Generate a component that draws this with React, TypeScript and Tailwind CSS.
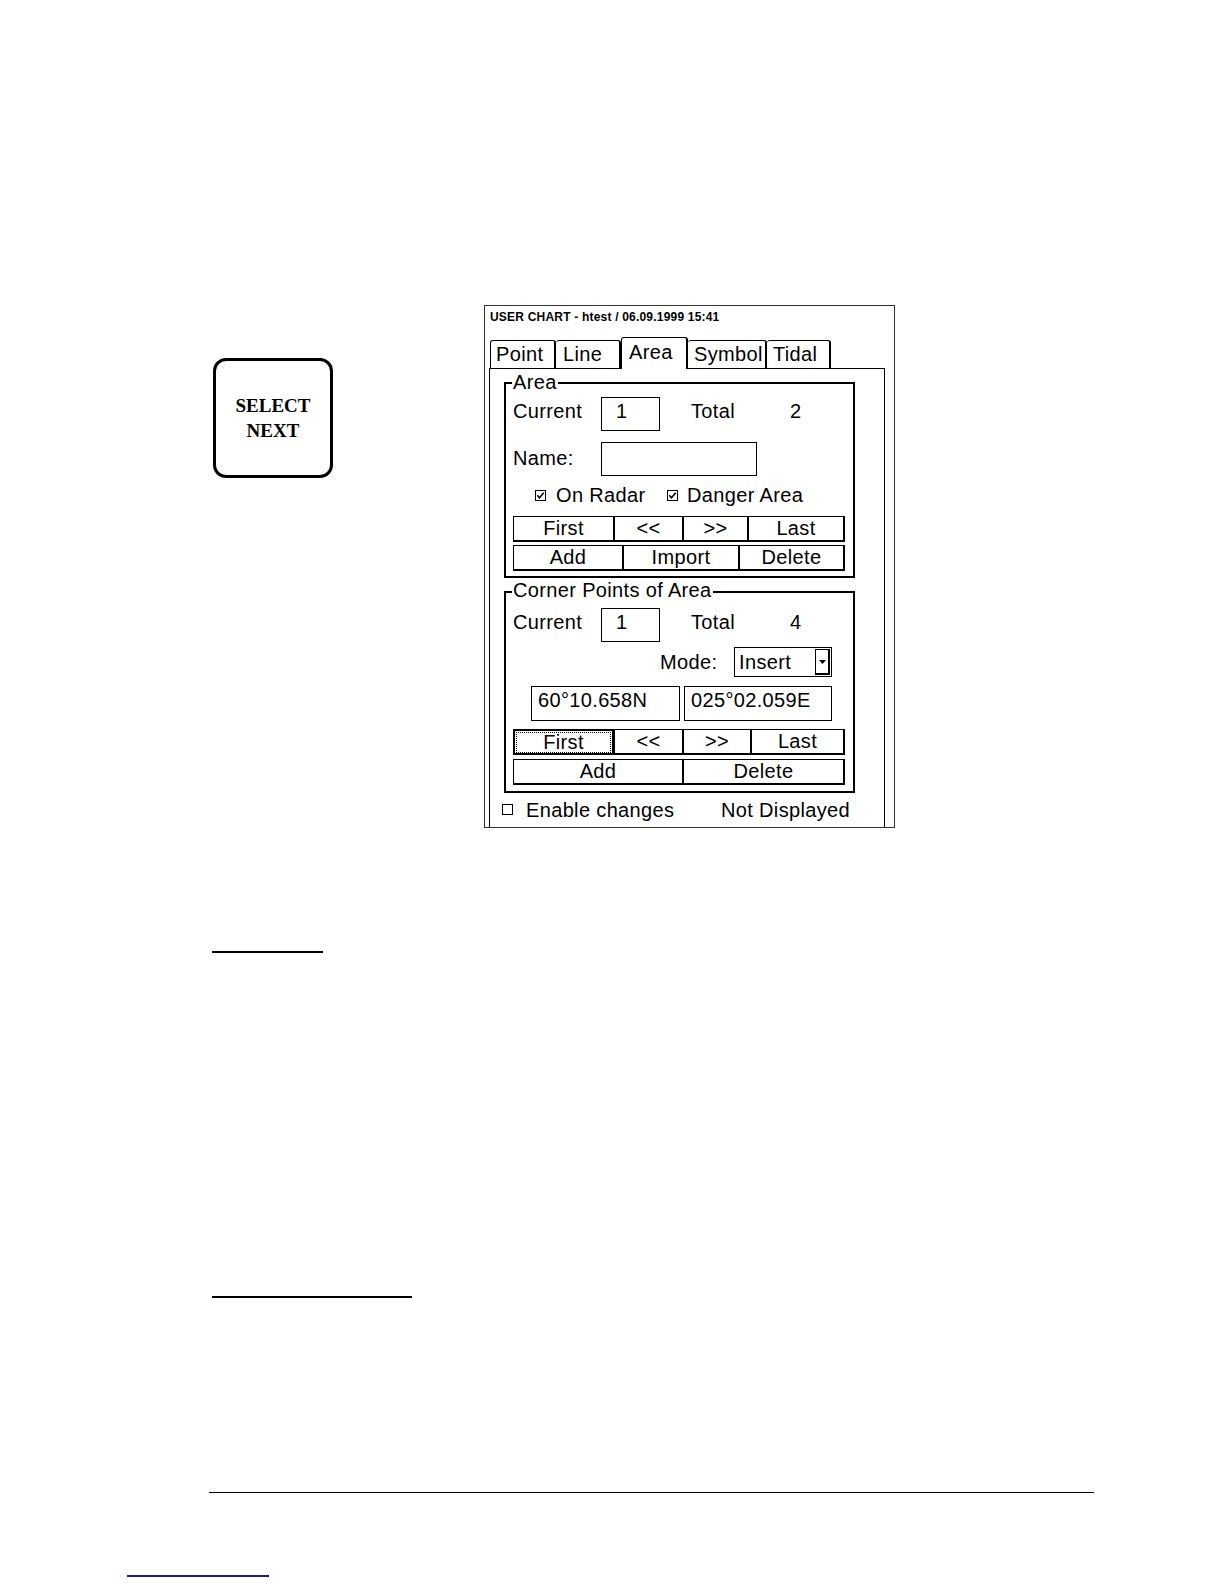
import React from "react";

function Box({ checked }: { checked?: boolean }) {
  return (
    <svg width="11" height="11" viewBox="0 0 11 11" className="shrink-0">
      <rect x="0.5" y="0.5" width="10" height="10" fill="white" stroke="black" />
      {checked && <path d="M2.3 5.3L4.5 7.8L8.7 2.8" fill="none" stroke="black" strokeWidth="1.6" />}
    </svg>
  );
}

function Btn({ className, children, first }: { className: string; children: React.ReactNode; first?: boolean }) {
  return (
    <div
      className={
        (first ? "border-l " : "") +
        "flex h-full justify-center border-t border-r-2 border-b-2 border-black leading-[22px] " +
        className
      }
    >
      {children}
    </div>
  );
}

function Group({
  title,
  className,
  legendClass,
  children,
}: {
  title: string;
  className: string;
  legendClass: string;
  children: React.ReactNode;
}) {
  return (
    <div className={"relative ml-[14px] w-[351px] border-2 border-black pl-[7px] " + className}>
      <span className={"absolute left-[6px] bg-white px-[1px] leading-[20px] " + legendClass}>{title}</span>
      {children}
    </div>
  );
}

function CountRow({ total }: { total: string }) {
  return (
    <div className="flex h-[34px] items-start">
      <div className="mt-[3px] w-[88px]">Current</div>
      <div className="h-[34px] w-[59px] border border-black pl-[14px] pt-[2px]">1</div>
      <div className="ml-[31px] mt-[3px] w-[99px]">Total</div>
      <div className="mt-[3px]">{total}</div>
    </div>
  );
}

function Dialog() {
  return (
    <div className="ml-[151px] flex h-[523px] w-[411px] flex-col border border-[#333] font-['Liberation_Sans',Arial,sans-serif] text-[20px] leading-[22px] tracking-[0.35px]">
      <div className="h-[16px] pl-[5px] pt-[4px] text-[12px] font-bold leading-[14px] tracking-[0.2px]">
        USER CHART - htest / 06.09.1999 15:41
      </div>
      <div className="ml-[5px] mt-[15px] flex h-[31px] items-end">
        <div className="h-[28px] w-[66px] rounded-t-[3px] border-l border-t border-r-2 border-black pl-[5px] pt-[2px]">Point</div>
        <div className="h-[28px] w-[65px] rounded-t-[3px] border-t border-r-2 border-black pl-[7px] pt-[2px]">Line</div>
        <div className="relative z-10 -mb-[1px] h-[32px] w-[67px] rounded-t-[3px] border-l border-t border-r-2 border-black bg-white pl-[7px] pt-[3px]">Area</div>
        <div className="h-[28px] w-[79px] rounded-t-[3px] border-t border-r-2 border-black pl-[6px] pt-[2px]">Symbol</div>
        <div className="h-[28px] w-[64px] rounded-t-[3px] border-t border-r-2 border-black pl-[6px] pt-[2px]">Tidal</div>
      </div>
      <div className="ml-[4px] flex w-[396px] flex-1 flex-col border-x border-t border-black">
        <Group title="Area" className="mt-[13px] pt-[13px] pb-[5px]" legendClass="-top-[12px]">
          <CountRow total="2" />
          <div className="mt-[11px] flex h-[34px] items-start">
            <div className="mt-[5px] w-[88px]">Name:</div>
            <div className="h-[34px] w-[156px] border border-black" />
          </div>
          <div className="mt-[8px] flex h-[22px] items-start">
            <div className="ml-[22px] flex w-[132px] items-start">
              <div className="mt-[6px]"><Box checked /></div>
              <span className="ml-[10px]">On Radar</span>
            </div>
            <div className="mt-[6px]"><Box checked /></div>
            <span className="ml-[9px]">Danger Area</span>
          </div>
          <div className="mt-[10px] flex h-[26px]">
            <Btn first className="w-[102px]">First</Btn>
            <Btn className="w-[69px]">&lt;&lt;</Btn>
            <Btn className="w-[65px]">&gt;&gt;</Btn>
            <Btn className="w-[96px]">Last</Btn>
          </div>
          <div className="mt-[3px] flex h-[26px]">
            <Btn first className="w-[111px]">Add</Btn>
            <Btn className="w-[116px]">Import</Btn>
            <Btn className="w-[105px]">Delete</Btn>
          </div>
        </Group>
        <Group title="Corner Points of Area" className="mt-[13px] pt-[15px] pb-[6px]" legendClass="-top-[13px]">
          <CountRow total="4" />
          <div className="mt-[5px] flex h-[30px] items-start">
            <div className="ml-[147px] mt-[4px] w-[74px]">Mode:</div>
            <div className="flex h-[30px] w-[98px] items-start border border-black">
              <span className="pl-[4px] pt-[3px]">Insert</span>
              <div className="ml-auto mr-[1px] mt-[1px] flex h-[26px] w-[15px] items-center justify-center border border-r-2 border-b-2 border-black">
                <svg width="7" height="4" viewBox="0 0 7 4">
                  <path d="M0 0H7L3.5 4Z" fill="black" />
                </svg>
              </div>
            </div>
          </div>
          <div className="mt-[9px] flex h-[35px]">
            <div className="ml-[18px] h-[35px] w-[149px] border border-black pl-[6px] pt-[2px]">60°10.658N</div>
            <div className="ml-[4px] h-[35px] w-[148px] border border-black pl-[6px] pt-[2px]">025°02.059E</div>
          </div>
          <div className="mt-[8px] flex h-[26px]">
            <div className="flex h-full w-[102px] border-2 border-r-[3px] border-black px-[1px] pt-[1px]">
              <div className="flex flex-1 justify-center border border-dotted border-black leading-[18px]">First</div>
            </div>
            <Btn className="w-[69px]">&lt;&lt;</Btn>
            <Btn className="w-[68px]">&gt;&gt;</Btn>
            <Btn className="w-[93px]">Last</Btn>
          </div>
          <div className="mt-[4px] flex h-[26px]">
            <Btn first className="w-[171px]">Add</Btn>
            <Btn className="w-[161px]">Delete</Btn>
          </div>
        </Group>
        <div className="mt-[6px] flex h-[22px] items-start">
          <div className="ml-[12px] flex w-[219px] items-start">
            <div className="mt-[5px]"><Box /></div>
            <span className="ml-[13px]">Enable changes</span>
          </div>
          <span>Not Displayed</span>
        </div>
      </div>
    </div>
  );
}

export default function App() {
  return (
    <div className="h-[1584px] w-[1224px] overflow-hidden bg-white text-black">
      <div className="flex items-start pt-[305px]">
        <div className="ml-[213px] mt-[53px] flex h-[120px] w-[120px] flex-col items-center justify-center rounded-[13px] border-[3px] border-black font-['Liberation_Serif',serif] text-[19px] font-bold leading-[25px]">
          <span>SELECT</span>
          <span>NEXT</span>
        </div>
        <Dialog />
      </div>
      <div className="ml-[212px] mt-[123px] h-[2px] w-[111px] bg-black" />
      <div className="ml-[212px] mt-[343px] h-[2px] w-[200px] bg-black" />
      <div className="ml-[209px] mt-[194px] h-px w-[885px] bg-black" />
      <div className="ml-[127px] mt-[82px] h-[2px] w-[142px] bg-[#1c1c96]" />
    </div>
  );
}
